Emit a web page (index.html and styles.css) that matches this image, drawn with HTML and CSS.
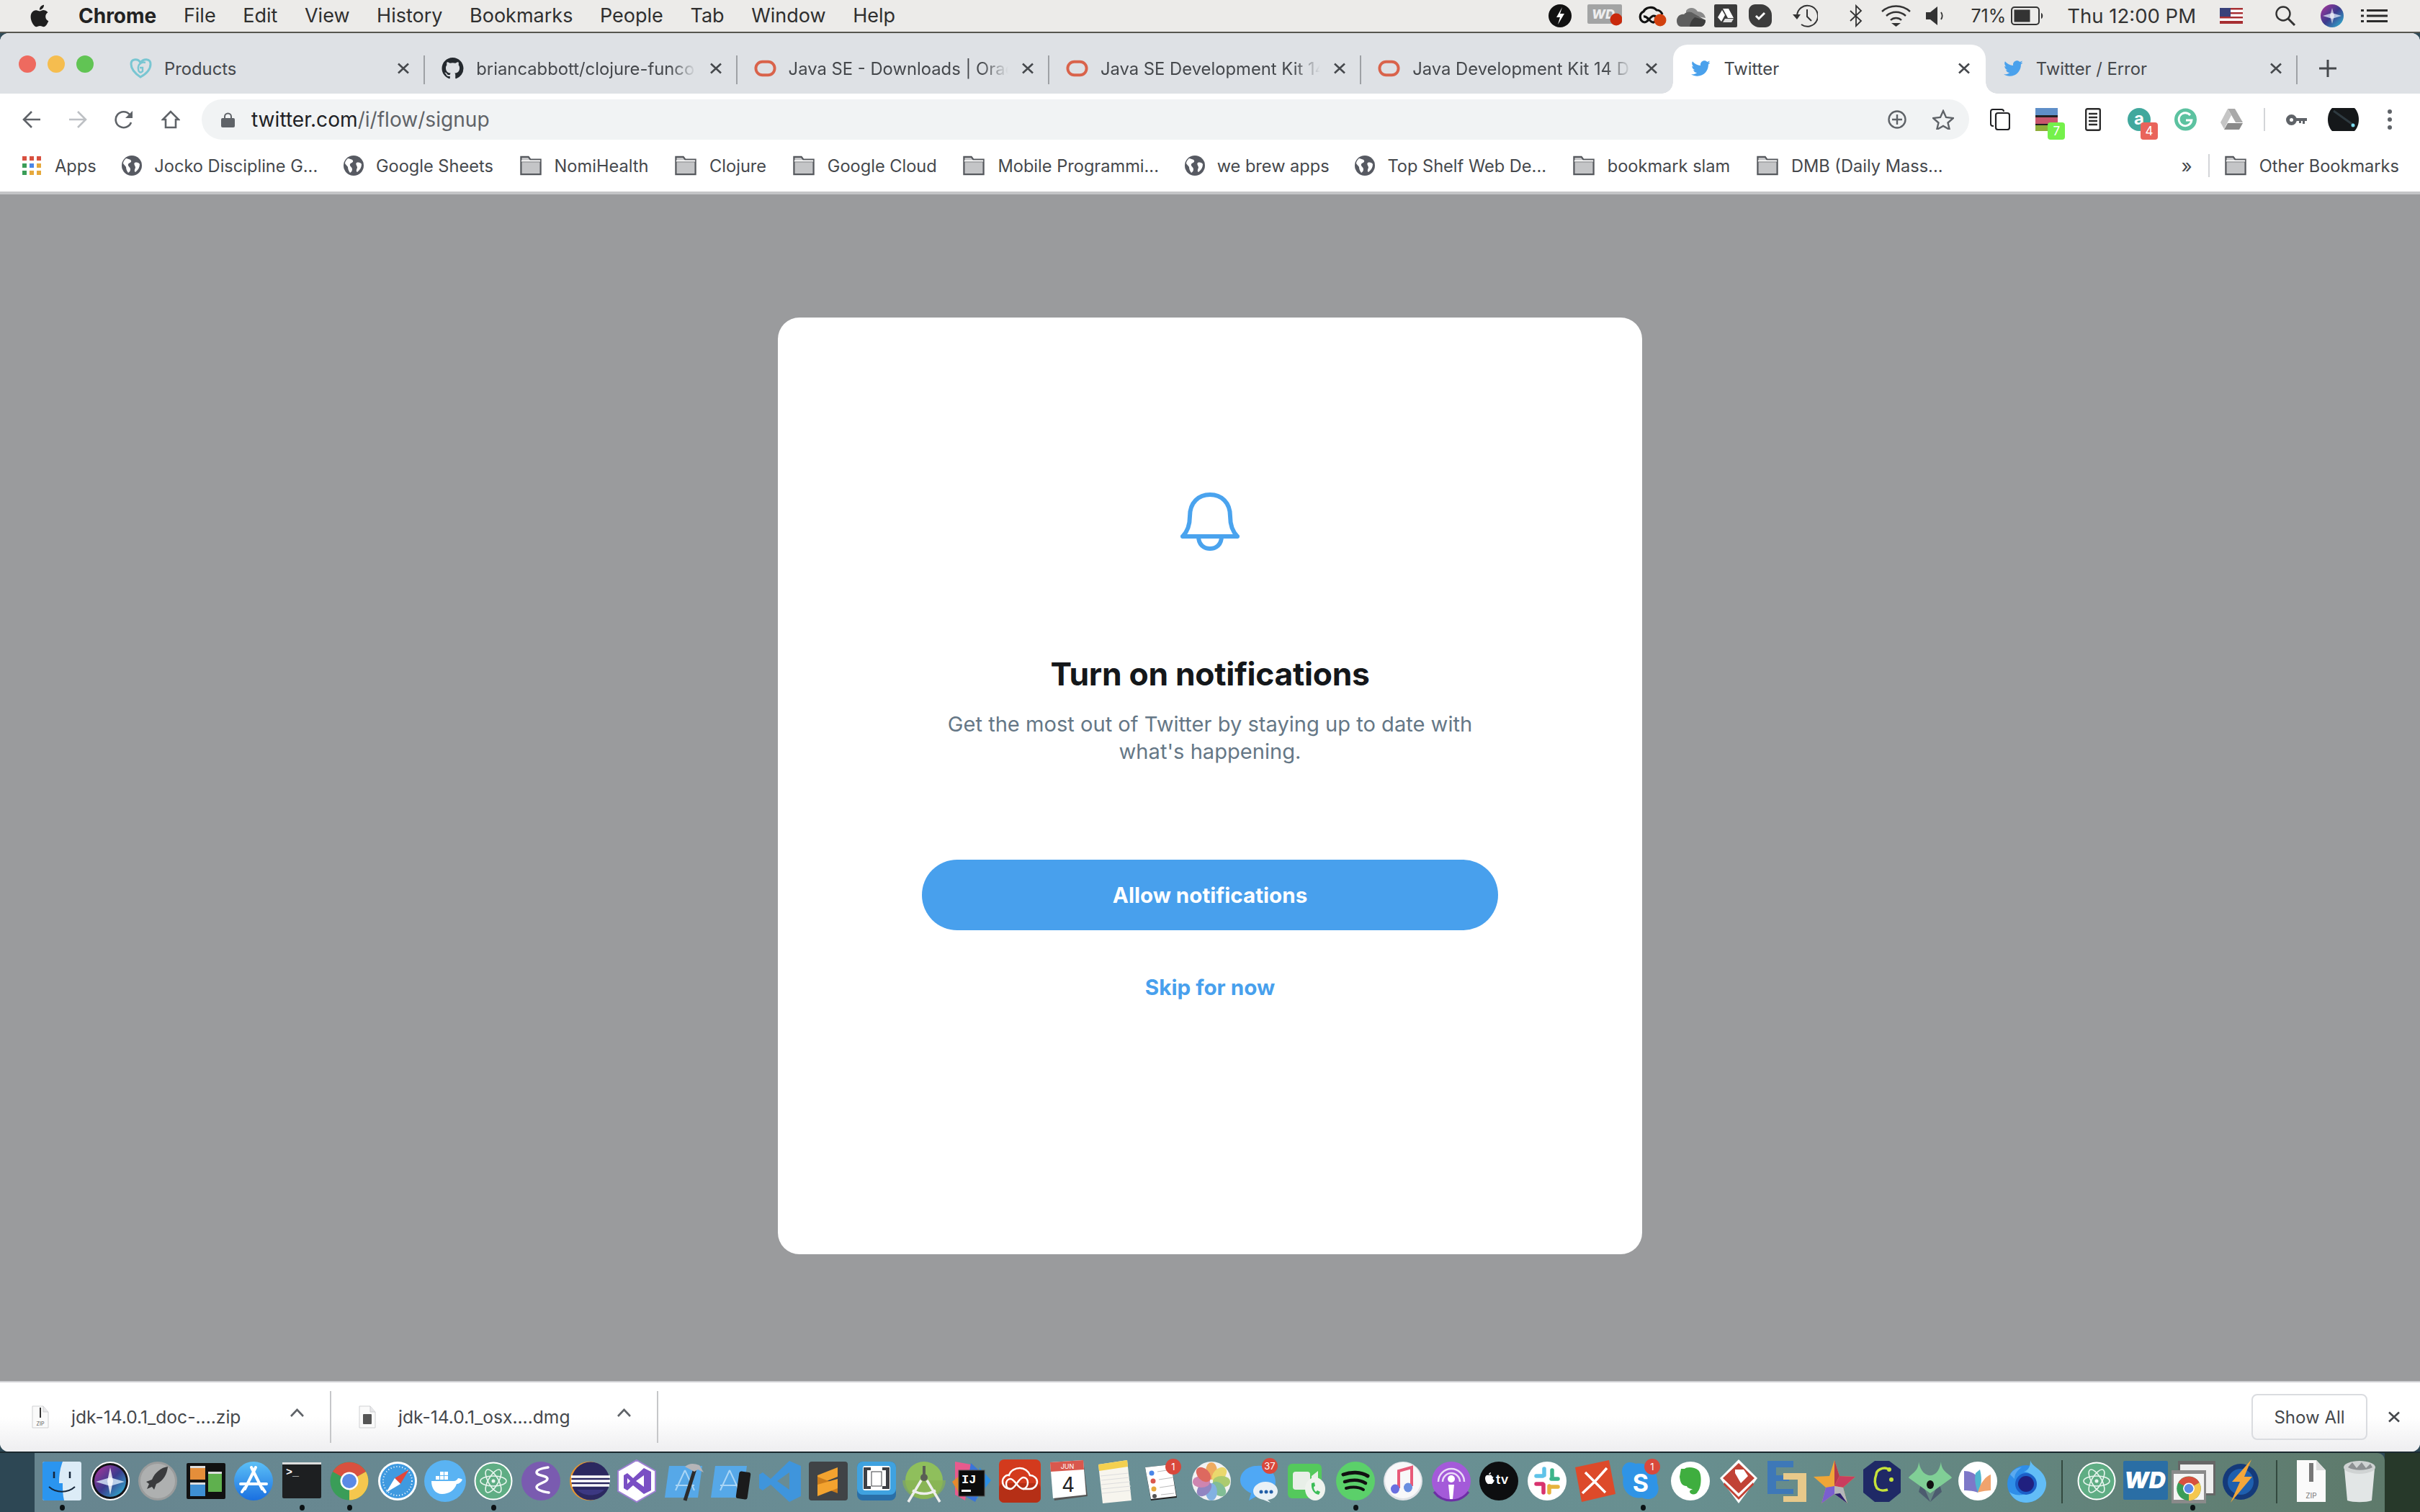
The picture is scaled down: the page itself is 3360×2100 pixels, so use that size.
FILE: index.html
```html
<!DOCTYPE html>
<html lang="en">
<head>
<meta charset="utf-8">
<title>Twitter</title>
<link rel="stylesheet" href="styles.css">
</head>
<body>
<svg class="defs" width="0" height="0" aria-hidden="true">
  <symbol id="bird" viewBox="0 0 24 24"><path fill="#4aa1ec" d="M23.643 4.937c-.835.37-1.732.62-2.675.733.962-.576 1.7-1.49 2.048-2.578-.9.534-1.897.922-2.958 1.13-.85-.904-2.06-1.47-3.4-1.47-2.572 0-4.658 2.086-4.658 4.66 0 .364.042.718.12 1.06-3.873-.195-7.304-2.05-9.602-4.868-.4.69-.63 1.49-.63 2.342 0 1.616.823 3.043 2.072 3.878-.764-.025-1.482-.234-2.11-.583v.06c0 2.257 1.605 4.14 3.737 4.568-.392.106-.803.162-1.227.162-.3 0-.593-.028-.877-.082.593 1.85 2.313 3.198 4.352 3.234-1.595 1.25-3.604 1.995-5.786 1.995-.376 0-.747-.022-1.112-.065 2.062 1.323 4.51 2.093 7.14 2.093 8.57 0 13.255-7.098 13.255-13.254 0-.2-.005-.402-.014-.602.91-.658 1.7-1.477 2.323-2.41z"/></symbol>
  <symbol id="oracle" viewBox="0 0 32 28"><rect x="2.500" y="4.500" width="27" height="19" rx="9.500" fill="none" stroke="#d9634b" stroke-width="4"/></symbol>
  <symbol id="x" viewBox="0 0 18 16"><path d="M2 1.500l14 13M16 1.500l-14 13" fill="none" stroke="#46494d" stroke-width="2.600"/></symbol>
  <symbol id="globe" viewBox="0 0 28 28"><circle cx="14" cy="14" r="14" fill="#575a62"/><path fill="#fff" d="M6 4c3 1 6 1 7 3 1 3-3 3-4 5-1 3 3 4 3 7 0 2-1 4-3 5-2-3-3-5-3-8-1-2-3-3-4-5 0-3 2-5 4-7zM18 10c3-1 6 0 7 2 0 4-2 8-6 11-2-1-1-4 0-6 0-3-3-5-1-7z"/></symbol>
  <symbol id="folder" viewBox="0 0 32 32"><path d="M1.500 29V3h11l3 4h15v22z" fill="#c4c5c7" stroke="#55585d" stroke-width="2.400"/><path d="M2 10h28" stroke="#55585d" stroke-width="2"/><path d="M2 8h28v2H2z" fill="#fff"/></symbol>
  <symbol id="chrome" viewBox="0 0 60 60"><circle cx="30" cy="29" r="26.500" fill="#3a9d58"/><path d="M30 29L7 16A26.500 26.500 0 0 1 53 16z" fill="#d8503f"/><path d="M30 29L53 16A26.500 26.500 0 0 1 30 55.500z" fill="#f5c74e"/><circle cx="30" cy="29" r="12.500" fill="#fff"/><circle cx="30" cy="29" r="10" fill="#5b8ae6"/></symbol>
  <symbol id="atom" viewBox="0 0 60 60"><circle cx="30" cy="29" r="26.500" fill="#fff"/><circle cx="30" cy="29" r="24.500" fill="#5fad84"/><g fill="none" stroke="#e8f5ee" stroke-width="1.600"><ellipse cx="30" cy="29" rx="18" ry="7"/><ellipse cx="30" cy="29" rx="18" ry="7" transform="rotate(60 30 29)"/><ellipse cx="30" cy="29" rx="18" ry="7" transform="rotate(120 30 29)"/></g><circle cx="30" cy="29" r="2.500" fill="#e8f5ee"/></symbol>
  <symbol id="filepage" viewBox="0 0 24 32"><path d="M1 1h15l7 8v22H1z" fill="#fafafa" stroke="#cfd0d2"/><path d="M16 1v8h7" fill="#e7e7e9" stroke="#cfd0d2"/></symbol>
  <linearGradient id="dkblue" x1="0" y1="0" x2="0" y2="1"><stop offset="0" stop-color="#5cc0f7"/><stop offset="1" stop-color="#1a6fe0"/></linearGradient>
  <linearGradient id="siriG" x1="0" y1="0" x2="1" y2="1"><stop offset="0" stop-color="#b0359c"/><stop offset=".5" stop-color="#3b3b8d"/><stop offset="1" stop-color="#2ec0d8"/></linearGradient>
</svg>

<header class="menubar">
  <svg class="apple" width="28" height="32" viewBox="3 1.500 18 21"><path fill="#1f1f1f" d="M18.710 19.500c-.83 1.240-1.710 2.450-3.050 2.470-1.340.03-1.770-.79-3.290-.79-1.530 0-2 .77-3.270.82-1.310.05-2.300-1.320-3.140-2.530C4.250 17 2.940 12.450 4.700 9.390c.87-1.520 2.430-2.480 4.120-2.510 1.280-.02 2.500.87 3.290.87.78 0 2.260-1.070 3.800-.91.65.03 2.470.26 3.640 1.980-.09.06-2.170 1.280-2.150 3.810.03 3.020 2.650 4.030 2.680 4.040-.03.07-.42 1.440-1.380 2.830M13 3.500c.73-.83 1.940-1.460 2.940-1.500.13 1.170-.34 2.350-1.040 3.190-.69.85-1.830 1.510-2.950 1.420-.15-1.150.41-2.350 1.050-3.110z"/></svg>
  <nav class="menus">
    <span class="menu menu-app">Chrome</span><span class="menu">File</span><span class="menu">Edit</span><span class="menu">View</span><span class="menu">History</span><span class="menu">Bookmarks</span><span class="menu">People</span><span class="menu">Tab</span><span class="menu">Window</span><span class="menu">Help</span>
  </nav>
  <div class="status">
    <svg class="st" width="32" height="32" viewBox="0 0 32 32"><circle cx="16" cy="16" r="16" fill="#111"/><path d="M19 4l-8 14h5l-3 10 9-15h-6z" fill="#fff"/></svg>
    <svg class="st st-wd" width="48" height="32" viewBox="0 0 48 32"><rect y="0" width="48" height="27" rx="2" fill="#a3a4a4"/><text x="6" y="20" class="st-wdtext">WD</text><circle cx="40" cy="21" r="8.500" fill="#c9290c"/></svg>
    <svg class="st st-cc" width="41" height="32" viewBox="0 0 41 32"><path d="M10 25a8 8 0 0 1-1-15c3-6 13-8 18-2 4 0 7 3 8 6M10 25c6 0 8-9 13-9 5 0 5 7 0 9-5 1-8-9-14-8" fill="none" stroke="#111" stroke-width="3.200"/><circle cx="32" cy="22" r="8.500" fill="#d2410f"/></svg>
    <svg class="st st-od" width="40" height="32" viewBox="0 0 40 32"><path d="M13 9c3-5 12-6 16 1 5 0 10 3 11 9L13 14z" fill="#8a8a8a"/><path d="M0 23c0-6 5-10 10-9 3-4 9-5 14-1l16 9c0 5-3 9-7 9H6c-3 0-6-3-6-8z" fill="#5e5e5e"/><path d="M18 31c0 0 0-7 7-13l15 4c0 5-3 9-7 9z" fill="#3d3d3d"/></svg>
    <svg class="st st-dr" width="32" height="32" viewBox="0 0 32 32"><rect width="32" height="32" rx="2" fill="#3b3b3b"/><path d="M12 6h8l7 13h-8z" fill="#fff"/><path d="M11 8l4 7-5 9-5-6z" fill="#fff"/><path d="M12 25l3-5h12l-3 5z" fill="#ddd"/></svg>
    <svg class="st st-sk" width="32" height="32" viewBox="0 0 32 32"><path d="M9 0h8c8 0 15 7 15 15v8c0 5-4 9-9 9h-8C7 32 0 25 0 17V9c0-5 4-9 9-9z" fill="#3c3c3c"/><path d="M10 16l4 4 8-8" fill="none" stroke="#fff" stroke-width="3"/></svg>
    <svg class="st st-tm" width="35" height="32" viewBox="0 0 35 32"><path d="M6 16a14.500 14.500 0 1 1 6 12" fill="none" stroke="#333" stroke-width="2"/><path d="M0 14h11l-5 7z" fill="#333"/><path d="M20 7v10l6 6" fill="none" stroke="#333" stroke-width="2"/></svg>
    <svg class="st st-bt" width="18" height="32" viewBox="0 0 18 32"><path d="M1 9l15 14-7 7V2l7 7L1 23" fill="none" stroke="#333" stroke-width="1.800"/></svg>
    <svg class="st st-wf" width="41" height="32" viewBox="0 0 41 32"><g fill="none" stroke="#333" stroke-width="2.400"><path d="M1 10c11-10 28-10 39 0"/><path d="M7 16c8-7 19-7 27 0"/><path d="M13 22c4-4 11-4 15 0"/></g><path d="M14 27h13l-6.500 5z" fill="#333" transform="translate(0 -1)"/></svg>
    <svg class="st st-vol" width="24" height="32" viewBox="0 0 24 32"><path d="M0 11h6l10-8v26L6 21H0z" fill="#333"/><path d="M21 11c2 3 2 7 0 10" fill="none" stroke="#333" stroke-width="1.800"/></svg>
    <span class="st st-pct">71%</span>
    <svg class="st st-bat" width="45" height="26" viewBox="0 0 45 26"><rect x="1" y="1" width="38" height="24" rx="4" fill="none" stroke="#333" stroke-width="2"/><rect x="4.500" y="4.500" width="22" height="17" fill="#333"/><path d="M42 9c3 1 3 7 0 8z" fill="#333"/></svg>
    <span class="st st-time">Thu 12:00 PM</span>
    <svg class="st st-flag" width="32" height="22" viewBox="0 0 32 22"><rect width="32" height="22" fill="#fff"/><path d="M0 0h32v2.500H0zM0 6h32v2.500H0zM0 12h32v2.500H0zM0 18h32v4H0z" fill="#a72f33"/><rect width="15" height="12" fill="#39417a"/></svg>
    <svg class="st st-srch" width="30" height="28" viewBox="0 0 30 28"><circle cx="12" cy="11" r="9.500" fill="none" stroke="#333" stroke-width="2.400"/><path d="M19 18l9 9" stroke="#333" stroke-width="3"/></svg>
    <svg class="st st-siri" width="32" height="32" viewBox="0 0 32 32"><circle cx="16" cy="16" r="16" fill="url(#siriG)"/><path d="M3 16l13-4 13 4-13 4z" fill="#e9f4ff" opacity=".7"/><path d="M16 5l3 11-3 11-3-11z" fill="#fff" opacity=".6"/></svg>
    <svg class="st st-list" width="37" height="20" viewBox="0 0 37 20"><path d="M0 1h4v3H0zM8 1h29v3H8zM0 8.500h4v3H0zM8 8.500h29v3H8zM0 16h4v3H0zM8 16h29v3H8z" fill="#2b2b2b"/></svg>
  </div>
</header>

<div class="window">
  <div class="tabstrip">
    <div class="lights"><i class="light l-red"></i><i class="light l-yel"></i><i class="light l-grn"></i></div>
    <div class="tab">
      <svg class="fav" width="31" height="28" viewBox="0 0 31 28"><path d="M15 26C6 20 2 14 2 8c0-8 10-8 13-2 4-6 14-6 14 2 0 6-5 13-14 18z" fill="none" stroke="#79c6d2" stroke-width="3"/><path d="M22 6c-6-2-11 3-10 9 0 4 3 6 6 3v-5h-4" fill="none" stroke="#79c6d2" stroke-width="2.400"/></svg>
      <span class="title">Products</span><svg class="close" width="18" height="16"><use href="#x"/></svg>
    </div>
    <div class="tab">
      <svg class="fav" width="31" height="30" viewBox="0 0 16 16"><path fill="#24292e" d="M8 0C3.580 0 0 3.580 0 8c0 3.540 2.290 6.530 5.470 7.590.4.070.55-.17.55-.38 0-.19-.01-.82-.01-1.490-2.010.37-2.530-.49-2.690-.94-.09-.23-.48-.94-.82-1.130-.28-.15-.68-.52-.01-.53.63-.01 1.080.58 1.230.82.72 1.210 1.870.87 2.330.66.070-.52.28-.87.51-1.070-1.780-.2-3.640-.89-3.640-3.950 0-.87.31-1.590.82-2.150-.08-.2-.36-1.020.08-2.120 0 0 .67-.21 2.200.82.64-.18 1.320-.27 2-.27.68 0 1.360.09 2 .27 1.530-1.040 2.200-.82 2.200-.82.44 1.100.16 1.920.08 2.120.51.56.82 1.270.82 2.150 0 3.070-1.870 3.750-3.650 3.950.29.25.54.73.54 1.480 0 1.070-.01 1.930-.01 2.200 0 .21.15.46.55.38A8.013 8.013 0 0 0 16 8c0-4.420-3.580-8-8-8z"/></svg>
      <span class="title fade">briancabbott/clojure-funco</span><svg class="close" width="18" height="16"><use href="#x"/></svg>
    </div>
    <div class="tab">
      <svg class="fav" width="31" height="28"><use href="#oracle"/></svg>
      <span class="title fade">Java SE - Downloads | Orac</span><svg class="close" width="18" height="16"><use href="#x"/></svg>
    </div>
    <div class="tab">
      <svg class="fav" width="31" height="28"><use href="#oracle"/></svg>
      <span class="title fade">Java SE Development Kit 14</span><svg class="close" width="18" height="16"><use href="#x"/></svg>
    </div>
    <div class="tab tab-prev">
      <svg class="fav" width="31" height="28"><use href="#oracle"/></svg>
      <span class="title fade">Java Development Kit 14 D</span><svg class="close" width="18" height="16"><use href="#x"/></svg>
    </div>
    <div class="tab tab-active">
      <svg class="fav" width="30" height="28"><use href="#bird"/></svg>
      <span class="title">Twitter</span><svg class="close" width="18" height="16"><use href="#x"/></svg>
    </div>
    <div class="tab">
      <svg class="fav" width="30" height="28"><use href="#bird"/></svg>
      <span class="title">Twitter / Error</span><svg class="close" width="18" height="16"><use href="#x"/></svg>
    </div>
    <svg class="newtab" width="26" height="26" viewBox="0 0 26 26"><path d="M13 1v24M1 13h24" stroke="#46494d" stroke-width="3"/></svg>
  </div>

  <div class="toolbar">
    <svg class="nav" width="26" height="26" viewBox="0 0 26 26"><path d="M25 13H3M13 2L2 13l11 11" fill="none" stroke="#5f6368" stroke-width="2.600"/></svg>
    <svg class="nav" width="26" height="26" viewBox="0 0 26 26"><path d="M1 13h22M13 2l11 11-11 11" fill="none" stroke="#bdc0c4" stroke-width="2.600"/></svg>
    <svg class="nav" width="27" height="26" viewBox="0 0 27 26"><path d="M23 17a11 11 0 1 1-2-11" fill="none" stroke="#5f6368" stroke-width="2.600"/><path d="M25 1v10H15z" fill="#5f6368"/></svg>
    <svg class="nav" width="26" height="26" viewBox="0 0 26 26"><path d="M13 2L2 13h4v11h14V13h4z" fill="none" stroke="#5f6368" stroke-width="2.600"/></svg>
    <div class="omnibox">
      <svg class="lock" width="19" height="21" viewBox="0 0 19 21"><path d="M5 8V6a4.500 4.500 0 0 1 9 0v2" fill="none" stroke="#5f6368" stroke-width="2"/><rect y="8" width="19" height="13" rx="2" fill="#5f6368"/></svg>
      <span class="url">twitter.com<span class="url-path">/i/flow/signup</span></span>
      <svg class="omni-add" width="26" height="26" viewBox="0 0 26 26"><circle cx="13" cy="13" r="11.500" fill="none" stroke="#5f6368" stroke-width="2.400"/><path d="M13 6v14M6 13h14" stroke="#5f6368" stroke-width="2.400"/></svg>
      <svg class="omni-star" width="30" height="28" viewBox="0 0 30 28"><path d="M15 2l4 9 10 1-7.500 6.500 2.300 9.500L15 23l-8.800 5 2.300-9.500L1 12l10-1z" fill="none" stroke="#5f6368" stroke-width="2.400"/></svg>
    </div>
    <div class="exts">
      <span class="ext"><svg width="28" height="30" viewBox="0 0 28 30"><path d="M5 24H4a3 3 0 0 1-3-3V4a3 3 0 0 1 3-3h12a3 3 0 0 1 3 3" fill="none" stroke="#202124" stroke-width="2"/><rect x="8" y="6" width="19" height="23" rx="3" fill="#fff" stroke="#202124" stroke-width="2.200"/></svg></span>
      <span class="ext"><svg width="31" height="32" viewBox="0 0 31 32"><rect width="31" height="10" fill="#5f8fc8"/><rect y="10" width="31" height="3" fill="#222"/><rect y="13" width="31" height="9" fill="#c8566c"/><rect y="22" width="31" height="2" fill="#222"/><rect y="24" width="31" height="8" fill="#8fae3a"/></svg><b class="badge badge-green">7</b></span>
      <span class="ext"><svg width="22" height="32" viewBox="0 0 22 32"><rect x="1.200" y="1.200" width="19.600" height="29.600" rx="2" fill="#fff" stroke="#2b2b2b" stroke-width="2.400"/><path d="M5 8h12M5 13h12M5 18h12M5 23h12" stroke="#2b2b2b" stroke-width="2.400"/></svg></span>
      <span class="ext"><svg width="32" height="32" viewBox="0 0 32 32"><circle cx="16" cy="16" r="16" fill="#41a89d"/><text x="16" y="23" class="ext-a">a</text></svg><b class="badge badge-red">4</b></span>
      <span class="ext"><svg width="31" height="32" viewBox="0 0 31 32"><circle cx="15.500" cy="16" r="15.500" fill="#5cc2a0"/><path d="M22 10a9 9 0 1 0 2 7h-8" fill="none" stroke="#fff" stroke-width="2.800"/></svg></span>
      <span class="ext"><svg width="31" height="30" viewBox="0 0 31 30"><path d="M10 0h10l11 19h-10z" fill="#a9a9a9"/><path d="M10 0l5 9-10 19L0 19z" fill="#c5c5c5"/><path d="M5 29l5-9h21l-5 9z" fill="#8a8a8a"/></svg></span>
      <i class="ext-sep"></i>
      <span class="ext"><svg width="29" height="15" viewBox="0 0 29 15"><circle cx="7.500" cy="7.500" r="5" fill="none" stroke="#5f6368" stroke-width="5"/><path d="M12 5h17v4h-3v4h-3V9h-2v3h-3V9h-6z" fill="#5f6368"/></svg></span>
      <span class="ext"><svg width="43" height="32" viewBox="0 0 43 32"><path d="M6 0h31c8 8 8 24 0 32H6C-2 24-2 8 6 0z" fill="#15181a"/><path d="M8 4l28 20" stroke="#2e3a40" stroke-width="3"/><circle cx="35" cy="24" r="2.500" fill="#7ddcf0"/></svg></span>
      <span class="ext"><svg width="6" height="28" viewBox="0 0 6 28"><circle cx="3" cy="3" r="3" fill="#5f6368"/><circle cx="3" cy="14" r="3" fill="#5f6368"/><circle cx="3" cy="25" r="3" fill="#5f6368"/></svg></span>
    </div>
  </div>

  <div class="bookmarks">
    <a class="bm"><svg width="26" height="26" viewBox="0 0 26 26"><path fill="#d8503f" d="M0 0h6v6H0zM10 0h6v6h-6zM20 0h6v6h-6z"/><path fill="#3a9d58" d="M0 10h6v6H0z"/><path fill="#4a86e8" d="M10 10h6v6h-6z"/><path fill="#e6a93c" d="M20 10h6v6h-6z"/><path fill="#3a9d58" d="M0 20h6v6H0z"/><path fill="#e6a93c" d="M10 20h6v6h-6zM20 20h6v6h-6z"/></svg><span class="bm-apps">Apps</span></a>
    <a class="bm"><svg width="28" height="28"><use href="#globe"/></svg><span>Jocko Discipline G...</span></a>
    <a class="bm"><svg width="28" height="28"><use href="#globe"/></svg><span>Google Sheets</span></a>
    <a class="bm"><svg width="32" height="30"><use href="#folder"/></svg><span>NomiHealth</span></a>
    <a class="bm"><svg width="32" height="30"><use href="#folder"/></svg><span>Clojure</span></a>
    <a class="bm"><svg width="32" height="30"><use href="#folder"/></svg><span>Google Cloud</span></a>
    <a class="bm"><svg width="32" height="30"><use href="#folder"/></svg><span>Mobile Programmi...</span></a>
    <a class="bm"><svg width="28" height="28"><use href="#globe"/></svg><span>we brew apps</span></a>
    <a class="bm"><svg width="28" height="28"><use href="#globe"/></svg><span>Top Shelf Web De...</span></a>
    <a class="bm"><svg width="32" height="30"><use href="#folder"/></svg><span>bookmark slam</span></a>
    <a class="bm"><svg width="32" height="30"><use href="#folder"/></svg><span>DMB (Daily Mass...</span></a>
    <div class="bm-end">
      <span class="bm-more">»</span><i class="bm-sep"></i>
      <a class="bm"><svg width="32" height="30"><use href="#folder"/></svg><span>Other Bookmarks</span></a>
    </div>
  </div>

  <main class="page">
    <section class="card">
      <svg class="bell" width="82" height="81" viewBox="0 0 82 81"><path d="M3 61H79M3 61C10 54 13 44 13 33C13 14 25 3 41 3C57 3 69 14 69 33C69 44 72 54 79 61M25 61C25 72 32 78 41 78C50 78 57 72 57 61" fill="none" stroke="#4aa3ee" stroke-width="6" stroke-linecap="round" stroke-linejoin="round"/></svg>
      <h1 class="card-title">Turn on notifications</h1>
      <p class="card-text">Get the most out of Twitter by staying up to date with what's happening.</p>
      <button class="btn-allow">Allow notifications</button>
      <a class="btn-skip">Skip for now</a>
    </section>
  </main>

  <div class="downloads">
    <div class="dl">
      <svg width="24" height="32" viewBox="0 0 24 32"><use href="#filepage" width="24" height="32"/><path d="M11 3h2v14h-2z" fill="#333"/><text x="12" y="28" class="dl-zip">ZIP</text></svg>
      <span class="dl-name">jdk-14.0.1_doc-....zip</span>
      <svg class="dl-chev" width="19" height="12" viewBox="0 0 19 12"><path d="M1 11l8.500-9L18 11" fill="none" stroke="#5f6368" stroke-width="2.600"/></svg>
    </div>
    <div class="dl">
      <svg width="24" height="32" viewBox="0 0 24 32"><use href="#filepage" width="24" height="32"/><rect x="6" y="12" width="12" height="14" rx="1" fill="#555"/></svg>
      <span class="dl-name">jdk-14.0.1_osx....dmg</span>
      <svg class="dl-chev" width="19" height="12" viewBox="0 0 19 12"><path d="M1 11l8.500-9L18 11" fill="none" stroke="#5f6368" stroke-width="2.600"/></svg>
    </div>
    <button class="dl-all">Show All</button>
    <svg class="dl-x" width="18" height="16"><use href="#x"/></svg>
  </div>
</div>

<footer class="desk">
  <div class="dock">
    <div class="dk run"><svg viewBox="0 0 60 60"><rect x="3" y="2" width="54" height="54" rx="3" fill="#dcecf7"/><path d="M6 2h25c-4 10-5 20-5 30h5c0 8 0 16 2 24H6a3 3 0 0 1-3-3V5a3 3 0 0 1 3-3z" fill="#2b95ef"/><path d="M19 16v9M41 16v9" stroke="#15263a" stroke-width="2.500"/><path d="M12 37c10 9 26 9 36 0" fill="none" stroke="#15263a" stroke-width="2"/></svg></div>
    <div class="dk"><svg viewBox="0 0 60 60"><circle cx="30" cy="29" r="27" fill="#fff"/><circle cx="30" cy="29" r="25" fill="#141418"/><circle cx="30" cy="29" r="22" fill="url(#siriG)"/><path d="M10 30l20-6 20 6-20 6z" fill="#dbeefc" opacity=".8"/><path d="M30 10l4 19-4 19-4-19z" fill="#fff" opacity=".8"/></svg></div>
    <div class="dk"><svg viewBox="0 0 60 60"><circle cx="30" cy="29" r="27" fill="#9a9c9c"/><circle cx="30" cy="29" r="24" fill="#aeb0b0"/><path d="M44 9c-9 1-18 8-22 18l-8 3 4 3-3 7 7-3 3 4 3-8c10-4 15-14 16-24z" fill="#3a3b3d"/></svg></div>
    <div class="dk"><svg viewBox="0 0 60 60"><rect x="3" y="4" width="54" height="50" rx="2" fill="#111"/><rect x="8" y="8" width="21" height="19" fill="#e58e3a"/><rect x="8" y="8" width="21" height="3" fill="#ddd"/><rect x="33" y="16" width="19" height="28" fill="#5fb04e"/><rect x="33" y="16" width="19" height="3" fill="#ddd"/><rect x="8" y="31" width="21" height="19" fill="#3e8fd3"/><rect x="8" y="31" width="21" height="3" fill="#ddd"/></svg></div>
    <div class="dk"><svg viewBox="0 0 60 60"><circle cx="30" cy="29" r="27" fill="url(#dkblue)"/><path d="M33 10L18 40M27 10l15 30M12 33h36M14 44l4-6M46 44l-4-6" fill="none" stroke="#fff" stroke-width="4" stroke-linecap="round"/></svg></div>
    <div class="dk run"><svg viewBox="0 0 60 60"><rect x="3" y="3" width="54" height="50" rx="2" fill="#1d1f21"/><rect x="3" y="3" width="54" height="3" fill="#ddd"/><text x="8" y="21" class="dk-term">&gt;_</text></svg></div>
    <div class="dk run"><svg viewBox="0 0 60 60" width="60" height="60"><use href="#chrome"/></svg></div>
    <div class="dk"><svg viewBox="0 0 60 60"><circle cx="30" cy="29" r="27" fill="#fff"/><circle cx="30" cy="29" r="24" fill="#3f9ae0"/><circle cx="30" cy="29" r="20" fill="none" stroke="#fff" stroke-width="2" stroke-dasharray="1 3"/><path d="M46 13L26 25l8 8z" fill="#e2473a"/><path d="M14 45l20-12-8-8z" fill="#fff"/></svg></div>
    <div class="dk"><svg viewBox="0 0 60 60"><circle cx="30" cy="29" r="29" fill="#5ab3f3"/><path d="M11 29h31c3 0 5-2 6-4 2 0 5 1 6 2-2 4-5 6-8 6-3 9-11 14-20 14-10 0-15-8-15-18z" fill="#fff"/><path d="M17 22h5v5h-5zM23 22h5v5h-5zM29 22h5v5h-5zM23 16h5v5h-5zM29 16h5v5h-5z" fill="#fff"/></svg></div>
    <div class="dk run"><svg viewBox="0 0 60 60" width="60" height="60"><use href="#atom"/></svg></div>
    <div class="dk"><svg viewBox="0 0 60 60"><circle cx="30" cy="29" r="27" fill="#7a5bb0"/><path d="M40 10c-7 1-16 3-16 7 0 5 15 4 15 9s-14 6-15 11c0 5 10 7 17 8" fill="none" stroke="#fff" stroke-width="3.500" stroke-linecap="round"/></svg></div>
    <div class="dk"><svg viewBox="0 0 60 60"><circle cx="30" cy="29" r="27" fill="#e8962f"/><circle cx="32" cy="29" r="26.500" fill="#2b2860"/><path d="M5 23h54M5 29h54M6 35h52" stroke="#fff" stroke-width="3.400"/><path d="M13 41c9 10 29 10 38 0z" fill="#3c3882"/></svg></div>
    <div class="dk"><svg viewBox="0 0 60 60"><path d="M30 0l26 15v28L30 58 4 43V15z" fill="#fff" stroke="#9d7fd3" stroke-width="2"/><path d="M40 11l10 5v26l-10 5-15-12-8 7-5-3V21l5-3 8 7zM40 21L29 29l11 8zM17 25v8l4-4z" fill="#7a4fc4" fill-rule="evenodd"/></svg></div>
    <div class="dk"><svg viewBox="0 0 60 60"><path d="M8 8h46l-6 44H2z" fill="#56a8e8"/><path d="M30 14L17 42M30 14l13 28M17 35h26" fill="none" stroke="#aad6f6" stroke-width="2"/><path d="M30 56l14-44" stroke="#2c2c2c" stroke-width="5"/><path d="M30 9c6-5 12-5 20-2l6 10-8-4-5 3z" fill="#b5b5b8"/></svg></div>
    <div class="dk"><svg viewBox="0 0 60 60"><path d="M6 8h44l-6 44H0z" fill="#56a8e8"/><path d="M26 14L13 42M26 14l13 28M13 35h26" fill="none" stroke="#aad6f6" stroke-width="2"/><rect x="37" y="16" width="16" height="38" rx="3" fill="#1b1b1b" transform="rotate(8 45 35)"/></svg></div>
    <div class="dk"><svg viewBox="0 0 60 60"><path d="M42 1l16 7v42l-16 8-26-24-11 8-5-3V20l5-3 11 9zM42 17L25 29l17 12z" fill="#3f95dc" fill-rule="evenodd"/></svg></div>
    <div class="dk"><svg viewBox="0 0 60 60"><rect x="3" y="2" width="54" height="54" rx="4" fill="#404346"/><path d="M43 10v13L15 34V21z" fill="#f3a32f"/><path d="M15 23v12l28 11V34z" fill="#c97b1c"/><path d="M15 34l28-8v13L15 50z" fill="#f3a32f"/></svg></div>
    <div class="dk"><svg viewBox="0 0 60 60"><path d="M3 10a8 8 0 0 1 8-8h38a8 8 0 0 1 8 8v38a8 8 0 0 1-8 8H11a8 8 0 0 1-8-8z" fill="#2a6fa8"/><rect x="3" y="2" width="54" height="46" rx="8" fill="#3fa2e0"/><rect x="11" y="8" width="38" height="34" rx="3" fill="#fff"/><path d="M12 10h10v4h-5v22h5v4H12zM48 10H38v4h5v22h-5v4h10z" fill="#3e4045"/><rect x="23" y="16" width="14" height="20" fill="#fff" stroke="#3e4045"/></svg></div>
    <div class="dk"><svg viewBox="0 0 60 60"><circle cx="30" cy="28" r="26" fill="#8fbf5c"/><path d="M0 28h60a30 26 0 0 1-60 0" fill="#86b053" opacity=".7"/><path d="M30 12v14M8 58L26 28M52 58L34 28M14 42c10 6 22 6 32 0" fill="none" stroke="#eee" stroke-width="3.500"/><circle cx="30" cy="24" r="5" fill="#5a5f55"/><path d="M28 8h4v12h-4z" fill="#5a5f55"/></svg></div>
    <div class="dk"><svg viewBox="0 0 60 60"><path d="M6 2l22 4-8 50-14-8z" fill="#e85a8d"/><path d="M28 4l22 20-16 34-14-8z" fill="#3a74d9"/><path d="M40 10l16 18-20 26z" fill="#2d8fe5"/><path d="M2 30l12-10v30z" fill="#e68a2e"/><rect x="11" y="14" width="36" height="36" fill="#0c0c0c" stroke="#555"/><text x="15" y="32" class="dk-ij">IJ</text><rect x="15" y="41" width="13" height="3" fill="#fff"/></svg></div>
    <div class="dk"><svg viewBox="0 0 60 60"><rect x="1" y="-1" width="58" height="60" rx="7" fill="#d33a1d"/><rect x="1" y="32" width="58" height="27" rx="7" fill="#b52f16"/><g fill="none" stroke="#fff" stroke-width="2.500"><path d="M17 40c-7 0-11-5-11-10 0-6 5-10 9-9 2-7 9-10 15-10 6 0 12 4 14 10 5 0 10 4 10 9 0 6-5 10-10 10H34"/><path d="M17 40c7 0 11-16 18-16 8 0 8 14 0 16-8 0-12-14-18-14-8 0-8 14 0 14"/></g></svg></div>
    <div class="dk"><svg viewBox="0 0 60 60"><path d="M5 5l46-5 6 50-46 6z" fill="#555"/><path d="M5 3l46-3 4 48-46 5z" fill="#fff"/><path d="M5 3l46-3 1 13-46 3z" fill="#d9584d"/><text x="29" y="12" class="dk-jun">JUN</text><text x="30" y="44" class="dk-day">4</text></svg></div>
    <div class="dk"><svg viewBox="0 0 60 60"><path d="M6 6l40-6 6 56-40 4z" fill="#f7f5ee"/><path d="M6 6l40-6 1 9-40 6z" fill="#f4d04f"/><path d="M9 22l39-4M10 28l39-4M10 34l40-4M11 40l40-4M11 46l40-4" stroke="#ddd" stroke-width="1"/></svg></div>
    <div class="dk"><svg viewBox="0 0 60 60"><path d="M4 10l36-4 8 46-36 4z" fill="#222"/><path d="M4 10l36-4 7 44-35 4z" fill="#fff"/><circle cx="13" cy="18" r="3.500" fill="#4a86e8"/><circle cx="15" cy="29" r="3.500" fill="#d9584d"/><circle cx="16" cy="40" r="3.500" fill="#e6a93c"/><circle cx="17" cy="50" r="3" fill="#555"/><path d="M21 16l20-3M23 27l20-3M24 38l20-3M26 48l18-2" stroke="#bbb"/><circle cx="43" cy="9" r="11" fill="#d9483b"/><text x="43" y="14" class="dk-badge">1</text></svg></div>
    <div class="dk"><svg viewBox="0 0 60 60"><circle cx="30" cy="29" r="27" fill="#f2f2f2"/><g opacity=".8"><ellipse cx="30" cy="15" rx="8" ry="12" fill="#ef9a3c"/><ellipse cx="41" cy="20" rx="8" ry="12" fill="#e9d24c" transform="rotate(45 41 20)"/><ellipse cx="44" cy="30" rx="12" ry="8" fill="#9bc24f"/><ellipse cx="40" cy="40" rx="8" ry="12" fill="#65b07f" transform="rotate(-45 40 40)"/><ellipse cx="30" cy="44" rx="8" ry="12" fill="#67a1dd"/><ellipse cx="20" cy="40" rx="8" ry="12" fill="#7a6bb5" transform="rotate(45 20 40)"/><ellipse cx="16" cy="30" rx="12" ry="8" fill="#c66aa0"/><ellipse cx="19" cy="20" rx="8" ry="12" fill="#d9483b" transform="rotate(-45 19 20)"/></g></svg></div>
    <div class="dk"><svg viewBox="0 0 60 60"><path d="M26 8c14-2 26 8 26 22S40 52 26 50l-11 6 3-10C10 42 3 36 3 28 3 16 14 8 26 8z" fill="#4fa8f5"/><path d="M38 30c10 0 17 6 17 13s-7 12-14 12l4 4-10-4c-8-2-14-6-14-12 0-7 8-13 17-13z" fill="#e9f1f6"/><circle cx="32" cy="44" r="2.500" fill="#235fa8"/><circle cx="39" cy="44" r="2.500" fill="#235fa8"/><circle cx="46" cy="44" r="2.500" fill="#235fa8"/><circle cx="44" cy="8" r="11" fill="#d9483b"/><text x="44" y="13" class="dk-badge">37</text></svg></div>
    <div class="dk"><svg viewBox="0 0 60 60"><rect x="3" y="5" width="47" height="48" rx="6" fill="#54c95c"/><rect x="10" y="16" width="24" height="25" rx="4" fill="#e8efe8"/><path d="M36 22l9-7v28l-9-7z" fill="#e8efe8"/><ellipse cx="41" cy="40" rx="14" ry="16" fill="#eff3ee"/><path d="M36 32c-1 8 3 15 10 16l2-4-4-2-2 2c-2-2-3-4-3-7l2-1-1-5z" fill="#3cbd58"/></svg></div>
    <div class="dk run"><svg viewBox="0 0 60 60"><circle cx="30" cy="29" r="27" fill="#5bd06a"/><g fill="none" stroke="#111" stroke-linecap="round"><path d="M13 20c11-4 24-4 34 2" stroke-width="5"/><path d="M15 30c10-3 21-3 29 2" stroke-width="4.500"/><path d="M17 39c8-2 17-2 24 2" stroke-width="4"/></g></svg></div>
    <div class="dk"><svg viewBox="0 0 60 60"><circle cx="30" cy="29" r="27" fill="#dfe2e6"/><circle cx="30" cy="28" r="25" fill="#f8f8f9"/><path d="M24 39V15l18-5v26" fill="none" stroke="#e85a78" stroke-width="4"/><ellipse cx="19" cy="40" rx="6" ry="6.500" fill="#6a6fe0"/><ellipse cx="37" cy="38" rx="6" ry="6.500" fill="#6a8fe0"/></svg></div>
    <div class="dk"><svg viewBox="0 0 60 60"><circle cx="30" cy="29" r="27" fill="#a45ad9"/><path d="M12 30a18 18 0 1 1 36 0M18 30a12 12 0 1 1 24 0" fill="none" stroke="#eadcf7" stroke-width="2.500"/><circle cx="30" cy="26" r="5" fill="#fff"/><path d="M26 34h8l-2 20h-4z" fill="#fff"/><path d="M6 44c6 8 14 12 24 12s18-4 24-12" fill="none" stroke="#6d2fa5" stroke-width="3"/></svg></div>
    <div class="dk"><svg viewBox="0 0 60 60"><circle cx="30" cy="29" r="27" fill="#0d0e10"/><path d="M21 23c-1-3-3-3-5-2-2-1-5 0-5 4 0 4 3 9 5 8 1 0 2 0 3 0 2 1 4-3 5-5-3-1-3-4-1-5zM16 20c0-2 2-3 3-3 0 2-1 3-3 3z" fill="#fff"/><text x="26" y="33" class="dk-tv">tv</text></svg></div>
    <div class="dk"><svg viewBox="0 0 60 60"><circle cx="30" cy="29" r="27" fill="#fff"/><g stroke-width="5.500" stroke-linecap="round"><path d="M26 12v9M15 22h9" stroke="#5fc3e8"/><path d="M37 14v9M36 26h9" stroke="#3cb48a"/><path d="M36 37h9M33 36v9" stroke="#e6b33d"/><path d="M25 34v11M15 33h9" stroke="#d8336e"/></g></svg></div>
    <div class="dk"><svg viewBox="0 0 60 60"><path d="M3 10L50 0l9 47-47 11z" fill="#dd4a2a"/><path d="M17 17l13 13 17-19M13 46l17-16 15 15" fill="none" stroke="#fff" stroke-width="3.500"/></svg></div>
    <div class="dk run"><svg viewBox="0 0 60 60"><path d="M12 3c4 0 6 1 8 2 14-3 32 9 30 27 4 8 1 22-13 22-4 0-6-1-8-2C13 55-1 42 3 24-2 14 3 3 12 3z" fill="#2f94e6"/><text x="27" y="44" class="dk-s">S</text><circle cx="43" cy="9" r="11" fill="#d9483b"/><text x="43" y="14" class="dk-badge">1</text></svg></div>
    <div class="dk"><svg viewBox="0 0 60 60"><circle cx="30" cy="29" r="27" fill="#fff"/><path d="M17 12h5c2-3 14-3 19 2 5 4 5 24-1 30-1 4-10 5-11 0 0-3 4-4 5-2-2-3-8-2-9-6-7 0-9-5-10-13z" fill="#3fae3f"/></svg></div>
    <div class="dk"><svg viewBox="0 0 60 60"><path d="M30 -1L56 25 30 60 4 25z" fill="#fff"/><path d="M30 4L52 25 30 46 8 25z" fill="#c14235"/><path d="M10 31l20 20 20-20 1 3-21 21L9 34z" fill="#c14235"/><path d="M25 13h12l6 9-10 10-8-14z" fill="#fff"/></svg></div>
    <div class="dk"><svg viewBox="0 0 60 60"><path d="M4 1h36v9H16v11h18v8H16v11h24v7H4z" fill="#3e78b8"/><path d="M26 18h32v40H26v-8h20V27H26z" fill="#e8c98a"/></svg></div>
    <div class="dk"><svg viewBox="0 0 60 60"><path d="M30 0l7 22 22 1-17 15 6 22-18-13z" fill="#e2c13d"/><path d="M30 0v47L12 60l6-22L1 23l22-1z" fill="#f0a637"/><path d="M30 0l7 22-7 14z" fill="#b33a4d"/><path d="M37 22l22 1-17 15-12-2z" fill="#c93d5e"/><path d="M30 36l12 2 6 22-18-13z" fill="#b5b6ba"/><path d="M30 36v11L12 60l6-22z" fill="#7a5fd0"/><path d="M30 47l18 13-10-14z" fill="#2d1f6d"/></svg></div>
    <div class="dk"><svg viewBox="0 0 60 60"><path d="M20 1h20l16 12v32L40 58H20L4 45V13z" fill="#1f2966"/><path d="M38 12c-7-3-16 2-16 8-3 8-2 14 1 19 3 3 9 4 15 2" fill="none" stroke="#c6e23a" stroke-width="3.500"/><circle cx="40" cy="13" r="3" fill="#c6e23a"/><circle cx="43" cy="27" r="3" fill="#c6e23a"/></svg></div>
    <div class="dk"><svg viewBox="0 0 60 60"><path d="M30 58L14 44 18 30z" fill="#4c5b6f"/><path d="M30 58L46 44 42 30z" fill="#4c5b6f"/><path d="M14 0C14 18 2 22 0 28l30 27 30-27c-2-6-15-10-15-28-2 16-8 24-15 24S16 16 14 0z" fill="#80cf96" transform="translate(0 2) scale(1 .8)"/><ellipse cx="30" cy="34" rx="5" ry="6" fill="#111"/></svg></div>
    <div class="dk"><svg viewBox="0 0 60 60"><circle cx="30" cy="29" r="27" fill="#fff"/><path d="M30 45c-7-3-17-3-19-3V15c8 0 14 3 19 8z" fill="#7d78c8"/><path d="M30 45c-3-9-5-19-3-27l6-5c2 9 4 20-3 32z" fill="#4fb6cf"/><path d="M30 45c5-2 15-3 18-3V20c-6 2-14 10-18 25z" fill="#f0a36d"/></svg></div>
    <div class="dk"><svg viewBox="0 0 60 60"><circle cx="30" cy="33" r="26" fill="#2f8ee8"/><path d="M36 0c1 9 20 13 22 31 1 15-12 28-28 28-10 0-19-6-23-15 11 9 34 4 34-13 0-9-7-15-14-15 7-2 9-8 9-16z" fill="#62bdf7"/><path d="M8 20c3-6 10-10 16-10-6 4-10 9-10 16z" fill="#5aa9f0"/><circle cx="30" cy="33" r="15" fill="#1b5fc8"/><circle cx="30" cy="33" r="11" fill="#20207f"/></svg></div>
    <i class="dk-sep"></i>
    <div class="dk"><svg viewBox="0 0 60 60" width="60" height="60"><use href="#atom"/></svg></div>
    <div class="dk"><svg viewBox="0 0 60 60"><rect y="1" width="62" height="54" rx="2" fill="#2a6ea5"/><text x="30" y="39" class="dk-wd">WD</text></svg></div>
    <div class="dk run"><svg viewBox="0 0 60 60"><rect x="10" y="1" width="52" height="48" fill="#666"/><rect x="13" y="6" width="46" height="40" fill="#eee"/><rect x="1" y="14" width="48" height="46" fill="#8a8a8a"/><rect x="4" y="19" width="42" height="36" fill="#f4f4f4"/><svg x="6" y="21" width="38" height="38" viewBox="0 0 60 60"><use href="#chrome"/></svg></svg></div>
    <div class="dk"><svg viewBox="0 0 60 60"><circle cx="30" cy="30" r="25" fill="#143a7a"/><circle cx="30" cy="30" r="18" fill="#1e5fae"/><path d="M45 -1L18 30h11L16 59l30-36H35z" fill="#f2a63a"/></svg></div>
    <i class="dk-sep"></i>
    <div class="dk"><svg viewBox="0 0 60 60"><path d="M10 0h27l13 14v44H10z" fill="#fafafa"/><path d="M37 0v14h13" fill="#ddd"/><rect x="27" y="4" width="6" height="26" fill="#777"/><text x="30" y="53" class="dk-zip">ZIP</text></svg></div>
    <div class="dk"><svg viewBox="0 0 60 60"><path d="M9 12h42l-4 44c-8 3-26 3-34 0z" fill="#e2e6e6"/><ellipse cx="30" cy="10" rx="22" ry="9" fill="#cfd3d3"/><path d="M14 10l6-7 6 8 7-8 6 8 6-6 3 5c-10 5-25 5-34 0z" fill="#8c9092"/></svg></div>
  </div>
</footer>
</body>
</html>
```
FILE: styles.css
```css
* { box-sizing: border-box; }
html, body { margin: 0; padding: 0; }
body {
  width: 3360px; height: 2100px; overflow: hidden;
  display: flex; flex-direction: column;
  font-family: Inter, "Liberation Sans", sans-serif;
  color: #3c4043;
  background: #2f4a57;
}
.defs { position: absolute; }
svg { display: block; flex: none; }

/* macOS menu bar */
.menubar {
  height: 46px; flex: none; display: flex; align-items: center;
  padding: 0 45px 0 41px;
  background: #ecebe9; border-bottom: 2px solid #56564f;
}
.apple { margin-right: 40px; }
.menus { display: flex; gap: 37.6px; font-size: 27px; color: #2f2f2f; }
.menu-app { font-weight: 700; font-size: 28px; color: #222; }
.status { margin-left: auto; display: flex; align-items: center; color: #333; }
.st-wd { margin-left: 22px; }
.st-wdtext { font: italic 800 18px Inter, sans-serif; fill: #eee; }
.st-cc { margin-left: 21px; }
.st-od { margin-left: 14px; }
.st-dr { margin-left: 12px; }
.st-sk { margin-left: 16px; }
.st-tm { margin-left: 29px; }
.st-bt { margin-left: 44px; }
.st-wf { margin-left: 26px; }
.st-vol { margin-left: 21px; }
.st-pct { margin-left: 38px; font-size: 25px; }
.st-bat { margin-left: 7px; }
.st-time { margin-left: 33px; font-size: 27.5px; }
.st-flag { margin-left: 33px; }
.st-srch { margin-left: 44px; }
.st-siri { margin-left: 34px; }
.st-list { margin-left: 24px; }

/* Browser window */
.window { flex: none; height: 1970px; display: flex; flex-direction: column; background: #fff; border-radius: 12px; overflow: hidden; }

.tabstrip { height: 84px; flex: none; display: flex; align-items: flex-end; background: #dee1e5; position: relative; }
.lights { width: 157px; height: 68px; flex: none; display: flex; align-items: flex-start; gap: 16px; padding: 15px 0 0 26px; }
.light { width: 24px; height: 24px; border-radius: 50%; }
.l-red { background: #ee6a5f; }
.l-yel { background: #f5bd4f; }
.l-grn { background: #61c454; }

.tab {
  width: 433.3px; height: 68px; flex: none; display: flex; align-items: center;
  padding: 0 21px 2px 23px; position: relative; font-size: 23.8px; color: #45484c;
}
.tab::after { content: ""; position: absolute; right: 0; top: 15px; width: 2px; height: 40px; background: #9ea1a5; }
.tab-prev::after { display: none; }
.fav { margin-right: 17px; }
.title { flex: 1; min-width: 0; white-space: nowrap; }
.fade {
  -webkit-mask-image: linear-gradient(90deg, #000 88%, transparent 100%);
  mask-image: linear-gradient(90deg, #000 88%, transparent 100%);
}
.close { margin-left: 18px; }
.tab-active { background: #fff; border-radius: 20px 20px 0 0; }
.tab-active::before, .tab-active::after {
  content: ""; position: absolute; bottom: 0; top: auto; width: 16px; height: 16px;
}
.tab-active::before { left: -16px; background: radial-gradient(circle at 0 0, transparent 15.5px, #fff 16px); }
.tab-active::after { right: -16px; background: radial-gradient(circle at 100% 0, transparent 15.5px, #fff 16px); }
.newtab { margin: 0 0 22px 29px; }

.toolbar { height: 68px; flex: none; display: flex; align-items: center; padding: 8px 0 4px 31px; background: #fff; }
.nav { margin-right: 38px; }
.nav:nth-child(4) { margin-right: 30px; }
.omnibox { width: 2454px; height: 56px; flex: none; border-radius: 28px; background: #f1f3f4; display: flex; align-items: center; padding: 0 21px 0 27px; }
.lock { margin-right: 23px; }
.url { font-size: 28.1px; color: #202124; }
.url-path { color: #5f6368; }
.omni-add { margin-left: auto; }
.omni-star { margin-left: 36px; }
.exts { display: flex; align-items: center; margin-left: 11px; }
.ext { width: 64.3px; display: flex; justify-content: center; align-items: center; position: relative; }
.ext-sep { width: 2px; height: 32px; margin: 0 12px; background: #d3d5d8; }
.ext-a { font: 700 24px Inter, sans-serif; fill: #fff; text-anchor: middle; }
.badge { position: absolute; top: 20px; left: 34px; width: 24px; height: 24px; border-radius: 4px; font-size: 17px; font-weight: 400; color: #fff; text-align: center; line-height: 24px; }
.badge-green { background: #75f14b; }
.badge-red { background: #e9645b; }

.bookmarks { height: 72px; flex: none; display: flex; align-items: center; gap: 35.7px; padding: 0 29px 4px 31px; font-size: 23.6px; color: #45484c; border-bottom: 4px solid #c4c5c7; background: #fff; }
.bm { display: flex; align-items: center; gap: 17px; white-space: nowrap; }
.bm-apps { margin-left: 2px; }
.bm-end { margin-left: auto; display: flex; align-items: center; gap: 0; }
.bm-more { font-size: 26px; margin-right: 22px; }
.bm-sep { width: 2px; height: 32px; background: #d3d5d8; margin-right: 20px; }

/* Twitter dialog over dimmed page */
.page { flex: 1; min-height: 0; background: #9a9b9d; display: flex; justify-content: center; align-items: flex-start; padding-top: 171px; }
.card { width: 1200px; height: 1301px; background: #fff; border-radius: 30px; display: flex; flex-direction: column; align-items: center; padding-top: 243px; }
.bell { margin-bottom: 143px; }
.card-title { margin: 0; font-size: 44.4px; line-height: 56px; font-weight: 700; color: #14171a; letter-spacing: -.3px; }
.card-text { margin: 23px 0 0; width: 800px; font-size: 29.1px; line-height: 38px; color: #657786; text-align: center; }
.btn-allow { margin-top: 131px; width: 800px; height: 98px; border: 0; border-radius: 49px; background: #48a0ed; color: #fff; font: 700 29.6px Inter, sans-serif; }
.btn-skip { margin-top: 61px; font-size: 29.7px; font-weight: 700; color: #48a0ed; line-height: 36px; }

/* Downloads shelf */
.downloads { height: 98px; flex: none; display: flex; align-items: center; padding: 0 27px 0 6px; background: linear-gradient(#fff 50%, #eeeef0); border-top: 2px solid #cfd0d3; font-size: 24.6px; color: #45484c; }
.dl { width: 454px; height: 72px; display: flex; align-items: center; padding: 0 36px 0 38px; border-right: 2px solid #c6c7c9; }
.dl-name { flex: 1; margin-left: 31px; }
.dl-chev { margin-bottom: 12px; }
.dl-zip { font: 400 7px Inter, sans-serif; fill: #555; text-anchor: middle; }
.dl-all { margin-left: auto; width: 161px; height: 64px; border: 2px solid #dadce0; border-radius: 8px; background: transparent; font: 400 24px Inter, sans-serif; color: #45484c; }
.dl-x { margin-left: 28px; }

/* Desktop and dock */
.desk { flex: 1; min-height: 0; border-top: 2px solid #1b2a30; display: flex;
  background: linear-gradient(90deg, #2d4754 48px, transparent 48px, transparent 3311px, #27392a 3311px);
}
.dock { margin-left: 48px; width: 3263px; display: flex; padding: 10px 0 0 5px; border-radius: 0 10px 0 0;
  background: linear-gradient(90deg, #67858f, #6a9096 50%, #688f90 70%, #5e7a6b); }
.dk { width: 66.5px; height: 60px; flex: none; display: flex; justify-content: center; position: relative; }
.dk > svg { width: 60px; height: 60px; overflow: visible; }
.run::after { content: ""; position: absolute; left: 30px; top: 62px; width: 7px; height: 8px; border-radius: 50%; background: #0c1214; }
.dk-sep { width: 2px; height: 60px; flex: none; margin: 0 14px 0 16px; background: #33493f; }
.dk-term { font: 700 15px "Liberation Mono", monospace; fill: #fff; }
.dk-ij { font: 700 17px "Liberation Mono", monospace; fill: #fff; }
.dk-jun { font: 400 9px Inter, sans-serif; fill: #fff; text-anchor: middle; }
.dk-day { font: 400 28px Inter, sans-serif; fill: #222; text-anchor: middle; }
.dk-badge { font: 400 13px Inter, sans-serif; fill: #fff; text-anchor: middle; }
.dk-tv { font: 600 18px Inter, sans-serif; fill: #fff; }
.dk-s { font: 700 34px Inter, sans-serif; fill: #fff; text-anchor: middle; }
.dk-wd { font: italic 900 32px Inter, sans-serif; fill: #fff; text-anchor: middle; }
.dk-zip { font: 400 10px Inter, sans-serif; fill: #777; text-anchor: middle; }
```
